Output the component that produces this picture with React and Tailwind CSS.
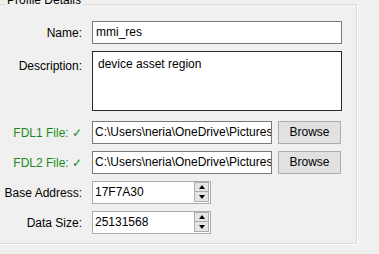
import React from 'react'

const FONT = { fontFamily: '"Liberation Sans", Arial, sans-serif' }

function Spin({ value }) {
  return (
    <div className="flex h-[23px] w-[119px] border border-[#acacac] bg-white">
      <div className="flex-1 truncate pl-[2px] pt-[3px] leading-[15px]">{value}</div>
      <div className="flex w-[16px] flex-col pt-[0px] pr-[1px] pb-[1px]">
        <div className="flex h-[10px] items-center justify-center border border-[#adadad] bg-[#e5e5e5]">
          <span className="h-0 w-0 border-x-[3.5px] border-b-[4px] border-x-transparent border-b-black" />
        </div>
        <div className="flex h-[10px] items-center justify-center border border-t-0 border-[#adadad] bg-[#e5e5e5]">
          <span className="h-0 w-0 border-x-[3.5px] border-t-[4px] border-x-transparent border-t-black" />
        </div>
      </div>
    </div>
  )
}

function Label({ children, green, top }) {
  return (
    <div
      className={`w-[83px] shrink-0 whitespace-nowrap text-right ${top ? 'self-start pt-[6px]' : ''} ${
        green ? 'text-[#1b8a1b]' : 'text-black'
      }`}
    >
      {children}
    </div>
  )
}

export default function App() {
  return (
    <div className="h-[254px] w-[379px] overflow-hidden bg-[#f0f0f0] pt-[4px] text-[12px] text-black" style={FONT}>
      <div className="relative ml-[-2px] h-[240px] w-[359px] border border-[#dcdcdc] pt-[16px] shadow-[1px_1px_0_#ffffff]">
        <div className="absolute left-[7px] top-[-12px] bg-[#f0f0f0] px-[1px] text-[12px] leading-[15px]">
          Profile Details
        </div>

        <div className="flex items-center">
          <Label>Name:</Label>
          <div className="ml-[10px] h-[23px] w-[250px] border border-[#7a7a7a] bg-white pl-[3px] pt-[3px] leading-[15px]">
            mmi_res
          </div>
        </div>

        <div className="mt-[7px] flex items-start">
          <Label top>Description:</Label>
          <div className="ml-[10px] h-[60px] w-[250px] border border-[#2a2a2a] bg-white pl-[5px] pt-[5px] leading-[15px]">
            device asset region
          </div>
        </div>

        <div className="mt-[10px] flex items-center">
          <Label green>FDL1 File: ✓</Label>
          <div className="ml-[10px] h-[23px] w-[180px] overflow-hidden whitespace-nowrap border border-[#7a7a7a] bg-white pl-[2px] pt-[3px] leading-[15px]">
            C:\Users\neria\OneDrive\Pictures\fdl1.bin
          </div>
          <button className="ml-[6px] h-[23px] w-[63px] border border-[#adadad] bg-[#e1e1e1] leading-[15px]">
            Browse
          </button>
        </div>

        <div className="mt-[7px] flex items-center">
          <Label green>FDL2 File: ✓</Label>
          <div className="ml-[10px] h-[23px] w-[180px] overflow-hidden whitespace-nowrap border border-[#7a7a7a] bg-white pl-[2px] pt-[3px] leading-[15px]">
            C:\Users\neria\OneDrive\Pictures\fdl2.bin
          </div>
          <button className="ml-[6px] h-[23px] w-[63px] border border-[#adadad] bg-[#e1e1e1] leading-[15px]">
            Browse
          </button>
        </div>

        <div className="mt-[7px] flex items-center">
          <Label>Base Address:</Label>
          <div className="ml-[10px]">
            <Spin value="17F7A30" />
          </div>
        </div>

        <div className="mt-[7px] flex items-center">
          <Label>Data Size:</Label>
          <div className="ml-[10px]">
            <Spin value="25131568" />
          </div>
        </div>
      </div>
    </div>
  )
}
